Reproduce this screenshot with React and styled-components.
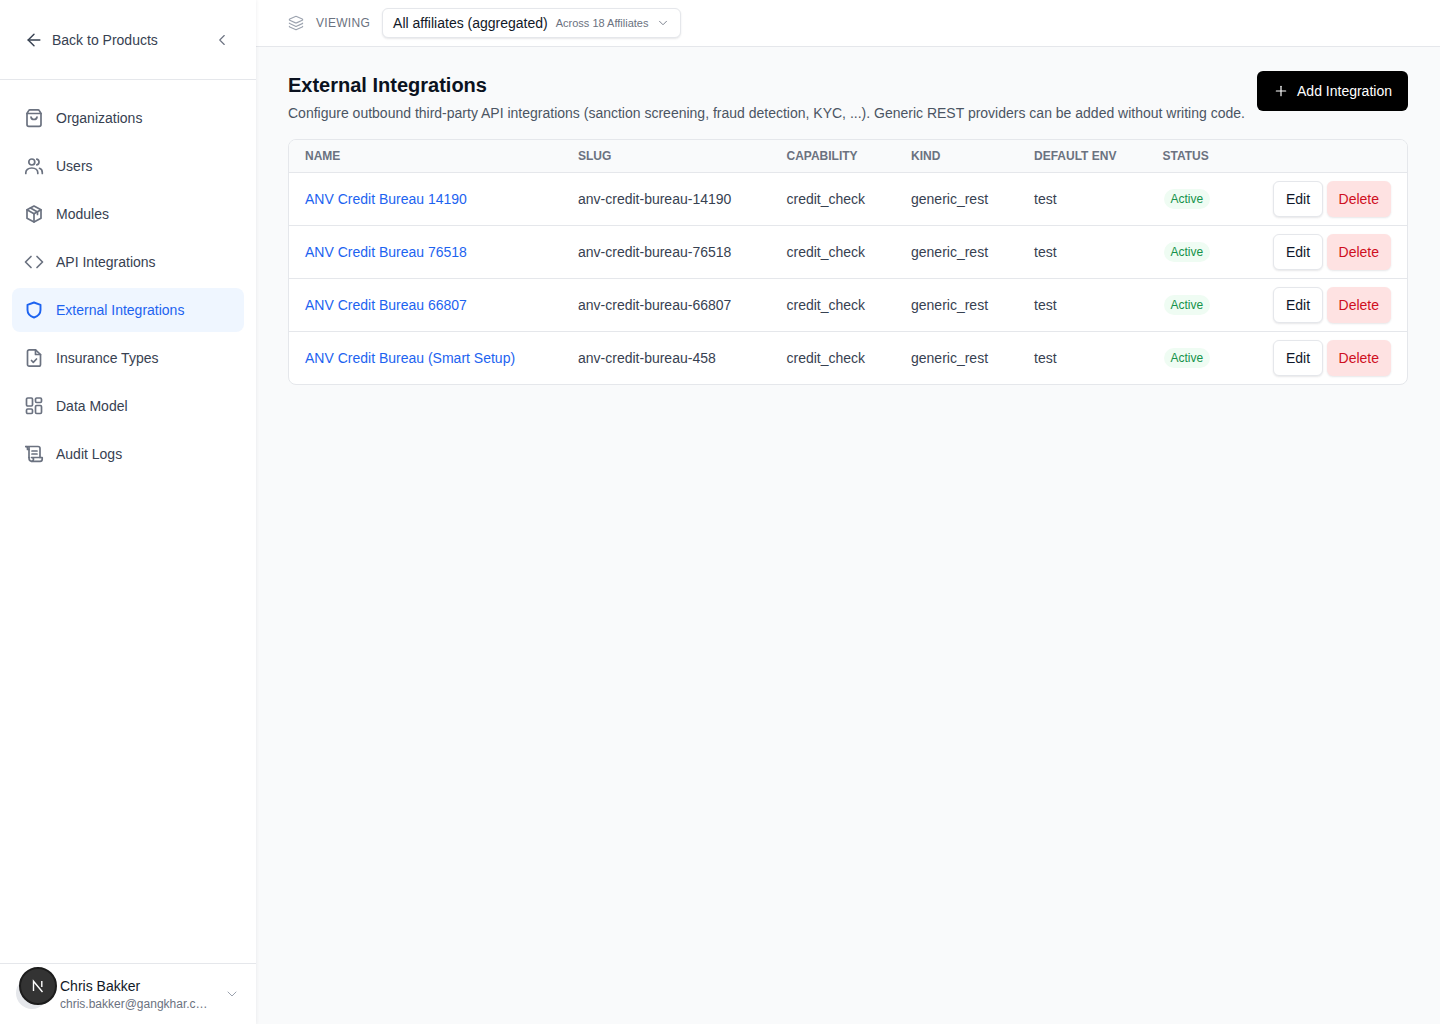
import React from "react";
import styled, { createGlobalStyle } from "styled-components";
import { ArrowLeft, ChevronLeft, ChevronDown, Layers, Plus } from "lucide-react";

const Global = createGlobalStyle`
  * { box-sizing: border-box; }
  html, body { margin: 0; padding: 0; height: 100%; }
  body { font-family: "Liberation Sans", Arial, sans-serif; font-size: 14px; color: #111827; background: #f9fafb; }
`;

const Page = styled.div`
  display: flex;
  width: 1440px;
  height: 1024px;
  overflow: hidden;
`;
const Sidebar = styled.aside`
  width: 256px;
  flex: none;
  height: 100%;
  display: flex;
  flex-direction: column;
  background: #fff;
  box-shadow: 1px 0 3px rgba(17, 24, 39, 0.05);
  z-index: 1;
`;
const SideHead = styled.div`
  height: 80px;
  flex: none;
  display: flex;
  align-items: center;
  justify-content: space-between;
  padding: 0 25px 0 24px;
  border-bottom: 1px solid #e5e7eb;
`;
const BackLink = styled.a`
  display: flex;
  align-items: center;
  gap: 8px;
  color: #374151;
  font-size: 14px;
  line-height: 20px;
`;
const Collapse = styled.span`
  display: flex;
  color: #6b7280;
`;
const Nav = styled.nav`
  flex: 1;
  display: flex;
  flex-direction: column;
  gap: 4px;
  padding: 16px 12px;
`;
const NavItem = styled.a`
  height: 44px;
  display: flex;
  align-items: center;
  gap: 12px;
  padding: 0 12px;
  border-radius: 8px;
  font-size: 14px;
  line-height: 20px;
  color: ${(p) => (p.$active ? "#1d63f0" : "#374151")};
  background: ${(p) => (p.$active ? "#eff6ff" : "transparent")};
  svg { color: ${(p) => (p.$active ? "#1d63f0" : "#6b7280")}; flex: none; }
`;
const UserBar = styled.div`
  height: 61px;
  flex: none;
  display: flex;
  align-items: center;
  border-top: 1px solid #e5e7eb;
  padding: 0 16px 0 19px;
  position: relative;
`;
const AvatarShadow = styled.span`
  position: absolute;
  left: 16px;
  top: 13px;
  width: 32px;
  height: 32px;
  border-radius: 50%;
  background: #e5e7eb;
`;
const Avatar = styled.span`
  position: relative;
  width: 38px;
  height: 38px;
  flex: none;
  margin-top: -16px;
  border-radius: 50%;
  background: #333;
  border: 2px solid #1c1c1c;
  color: #fff;
  display: flex;
  align-items: center;
  justify-content: center;
`;
const UserInfo = styled.div`
  flex: 1;
  min-width: 0;
  margin-left: 3px;
  display: flex;
  flex-direction: column;
  margin-top: -1px;
`;
const UserName = styled.span`
  font-size: 14px;
  line-height: 20px;
  color: #111827;
`;
const UserMail = styled.span`
  font-size: 12px;
  line-height: 16px;
  color: #6b7280;
  width: 148px;
  white-space: nowrap;
  overflow: hidden;
  text-overflow: ellipsis;
`;
const UserChevron = styled.span`
  display: flex;
  color: #9ca3af;
`;

const Main = styled.main`
  flex: 1;
  min-width: 0;
  display: flex;
  flex-direction: column;
`;
const TopBar = styled.header`
  height: 47px;
  flex: none;
  display: flex;
  align-items: center;
  gap: 12px;
  padding: 0 32px;
  background: #fff;
  border-bottom: 1px solid #e5e7eb;
`;
const ViewingLabel = styled.span`
  display: flex;
  align-items: center;
  gap: 12px;
  font-size: 12px;
  line-height: 16px;
  letter-spacing: 0.3px;
  color: #6b7280;
  svg { color: #9ca3af; }
`;
const Selector = styled.button`
  height: 30px;
  width: 299px;
  display: flex;
  align-items: center;
  padding: 0 10px;
  background: #fff;
  border: 1px solid #e5e7eb;
  border-radius: 6px;
  box-shadow: 0 1px 2px rgba(17, 24, 39, 0.1);
  font: inherit;
  white-space: nowrap;
  svg { color: #6b7280; margin-left: auto; }
`;
const SelectorMain = styled.span`
  font-size: 14px;
  color: #111827;
`;
const SelectorSub = styled.span`
  font-size: 11px;
  color: #6b7280;
  margin-left: 8px;
`;
const Content = styled.div`
  padding: 24px 32px;
  display: flex;
  flex-direction: column;
  gap: 16px;
`;
const TitleRow = styled.div`
  display: flex;
  align-items: flex-start;
  justify-content: space-between;
`;
const TitleBlock = styled.div`
  display: flex;
  flex-direction: column;
  gap: 4px;
`;
const Title = styled.h1`
  margin: 0;
  font-size: 20px;
  line-height: 28px;
  font-weight: 700;
  color: #0b1220;
`;
const Desc = styled.p`
  margin: 0;
  font-size: 14px;
  line-height: 20px;
  color: #4b5563;
  white-space: nowrap;
`;
const AddButton = styled.button`
  height: 40px;
  width: 151px;
  flex: none;
  display: flex;
  align-items: center;
  justify-content: center;
  gap: 8px;
  background: #000;
  color: #fff;
  border: 0;
  border-radius: 6px;
  font: inherit;
  font-size: 14px;
`;
const TableCard = styled.div`
  background: #fff;
  border: 1px solid #e5e7eb;
  border-radius: 8px;
  overflow: hidden;
`;
const Table = styled.table`
  width: 100%;
  border-collapse: collapse;
  table-layout: fixed;
`;
const Th = styled.th`
  height: 32px;
  padding: 0 16px;
  text-align: left;
  font-size: 12px;
  font-weight: 700;
  color: #6b7280;
  background: #f9fafb;
  text-transform: uppercase;
`;
const Tr = styled.tr`
  border-top: 1px solid #e5e7eb;
`;
const Td = styled.td`
  height: 53px;
  padding: 0 16px;
  font-size: 14px;
  color: #374151;
  white-space: nowrap;
`;
const NameLink = styled.a`
  color: #1d63f0;
`;
const Badge = styled.span`
  display: flex;
  width: fit-content;
  align-items: center;
  height: 20px;
  margin: 1px 0 0 1px;
  padding: 0 7px;
  border-radius: 999px;
  background: #effcf3;
  color: #15924a;
  font-size: 12px;
`;
const Actions = styled.div`
  display: flex;
  justify-content: flex-end;
  gap: 4px;
`;
const Btn = styled.button`
  height: 36px;
  padding: 0 ${(p) => (p.$danger ? "12px" : "11.5px")};
  border-radius: 6px;
  font: inherit;
  font-size: 14px;
  border: ${(p) => (p.$danger ? "0" : "1px solid #e5e7eb")};
  background: ${(p) => (p.$danger ? "#fee2e2" : "#fff")};
  color: ${(p) => (p.$danger ? "#cf0f1e" : "#0f172a")};
  box-shadow: 0 1px 2px rgba(17, 24, 39, 0.1);
`;

const Ic = ({ children, size = 20, sw = 1.7 }) => (
  <svg width={size} height={size} viewBox="0 0 20 20" fill="none" stroke="currentColor" strokeWidth={sw} strokeLinecap="round" strokeLinejoin="round">
    {children}
  </svg>
);
const items = [
  ["Organizations", <Ic><path d="M6 1.800h8a1.500 1.500 0 0 1 1.300.8L17 5.500v11a1.800 1.800 0 0 1-1.800 1.800H4.800A1.800 1.800 0 0 1 3 16.500v-11l1.700-2.900a1.500 1.500 0 0 1 1.300-.8z" /><path d="M3 5.500h14" /><path d="M7 9c.3 1.700 1.500 2.500 3 2.500s2.700-.8 3-2.500" /></Ic>],
  ["Users", <Ic><circle cx="7.800" cy="6" r="3" /><path d="M1.800 17.500v-.8c0-2.700 2.200-4.700 6-4.700s6 2 6 4.700v.8" /><path d="M12.800 3.100a3 3 0 0 1 0 5.800" /><path d="M15.500 12.300c1.800.6 2.800 2.200 2.800 4.400v.8" /></Ic>],
  ["Modules", <Ic><path d="M10 2 17 5.800v8.400L10 18l-7-3.800V5.800z" /><path d="M3 5.800 10 9.800l7-4" /><path d="M10 9.800V18" /><path d="M6.500 3.900l7 4v2.500" /></Ic>],
  ["API Integrations", <Ic><path d="M7 4.500 1.500 10 7 15.500" /><path d="M13 4.500 18.500 10 13 15.500" /></Ic>],
  ["External Integrations", <Ic sw={1.9}><path d="M10 2.500 16.500 4.800v5.200c0 4-2.800 6.300-6.500 7.500-3.700-1.200-6.500-3.500-6.500-7.500V4.800z" /></Ic>],
  ["Insurance Types", <Ic><path d="M11.500 1.800H5.200A1.700 1.700 0 0 0 3.500 3.500v13a1.700 1.700 0 0 0 1.700 1.700h9.600a1.700 1.700 0 0 0 1.700-1.700V6.500z" /><path d="M11.500 1.800V6.500h5" /><path d="M7.500 12.500l1.800 1.800 3.200-3.300" /></Ic>],
  ["Data Model", <Ic><rect x="2.500" y="2" width="6" height="8" rx="1.200" /><rect x="11.500" y="2" width="6" height="4.500" rx="1.200" /><rect x="2.500" y="13" width="6" height="4.500" rx="1.200" /><rect x="11.500" y="9.500" width="6" height="8" rx="1.200" /></Ic>],
  ["Audit Logs", <Ic><path d="M1.800 2.500h12.200a2 2 0 0 1 2 2v9" /><path d="M1.800 2.500c.9 0 1.700.8 1.700 1.800V5.500H5" /><path d="M5 3v10.500" /><path d="M8 7h5M8 10h5" /><path d="M7.500 13.500h10.700v1.800a2 2 0 0 1-2 2H7.800a2 2 0 0 0 1.700-2c0-1-.9-1.800-2-1.800z" /><path d="M5 13.500c0 2 1 3.800 2.800 3.800" /></Ic>],
];
const rows = [
  ["ANV Credit Bureau 14190", "anv-credit-bureau-14190"],
  ["ANV Credit Bureau 76518", "anv-credit-bureau-76518"],
  ["ANV Credit Bureau 66807", "anv-credit-bureau-66807"],
  ["ANV Credit Bureau (Smart Setup)", "anv-credit-bureau-458"],
];
const cols = [273, 208.5, 124.5, 123, 128.5, 110, 150.5];

export default function App() {
  return (
    <Page>
      <Global />
      <Sidebar>
        <SideHead>
          <BackLink><ArrowLeft size={20} strokeWidth={1.7} />Back to Products</BackLink>
          <Collapse><ChevronLeft size={18} strokeWidth={1.5} /></Collapse>
        </SideHead>
        <Nav>
          {items.map(([label, icon]) => (
            <NavItem key={label} $active={label === "External Integrations"}>{icon}{label}</NavItem>
          ))}
        </Nav>
        <UserBar>
          <AvatarShadow />
          <Avatar>
            <svg width="14" height="14" viewBox="0 0 14 14" fill="none" stroke="#fff" strokeWidth="1.400"><path d="M2.500 12V2.200L11.500 13M10.800 2v6" /></svg>
          </Avatar>
          <UserInfo>
            <UserName>Chris Bakker</UserName>
            <UserMail>chris.bakker@gangkhar.com</UserMail>
          </UserInfo>
          <UserChevron><ChevronDown size={16} strokeWidth={1.5} /></UserChevron>
        </UserBar>
      </Sidebar>
      <Main>
        <TopBar>
          <ViewingLabel><Layers size={16} strokeWidth={1.7} />VIEWING</ViewingLabel>
          <Selector>
            <SelectorMain>All affiliates (aggregated)</SelectorMain>
            <SelectorSub>Across 18 Affiliates</SelectorSub>
            <ChevronDown size={14} strokeWidth={1.5} />
          </Selector>
        </TopBar>
        <Content>
          <TitleRow>
            <TitleBlock>
              <Title>External Integrations</Title>
              <Desc>Configure outbound third-party API integrations (sanction screening, fraud detection, KYC, ...). Generic REST providers can be added without writing code.</Desc>
            </TitleBlock>
            <AddButton><Plus size={16} strokeWidth={1.8} />Add Integration</AddButton>
          </TitleRow>
          <TableCard>
            <Table>
              <colgroup>{cols.map((w, i) => <col key={i} style={{ width: w }} />)}</colgroup>
              <thead>
                <tr>
                  {["Name", "Slug", "Capability", "Kind", "Default Env", "Status", ""].map((h, i) => <Th key={i}>{h}</Th>)}
                </tr>
              </thead>
              <tbody>
                {rows.map(([name, slug]) => (
                  <Tr key={slug}>
                    <Td><NameLink>{name}</NameLink></Td>
                    <Td>{slug}</Td>
                    <Td>credit_check</Td>
                    <Td>generic_rest</Td>
                    <Td>test</Td>
                    <Td><Badge>Active</Badge></Td>
                    <Td>
                      <Actions>
                        <Btn>Edit</Btn>
                        <Btn $danger>Delete</Btn>
                      </Actions>
                    </Td>
                  </Tr>
                ))}
              </tbody>
            </Table>
          </TableCard>
        </Content>
      </Main>
    </Page>
  );
}
